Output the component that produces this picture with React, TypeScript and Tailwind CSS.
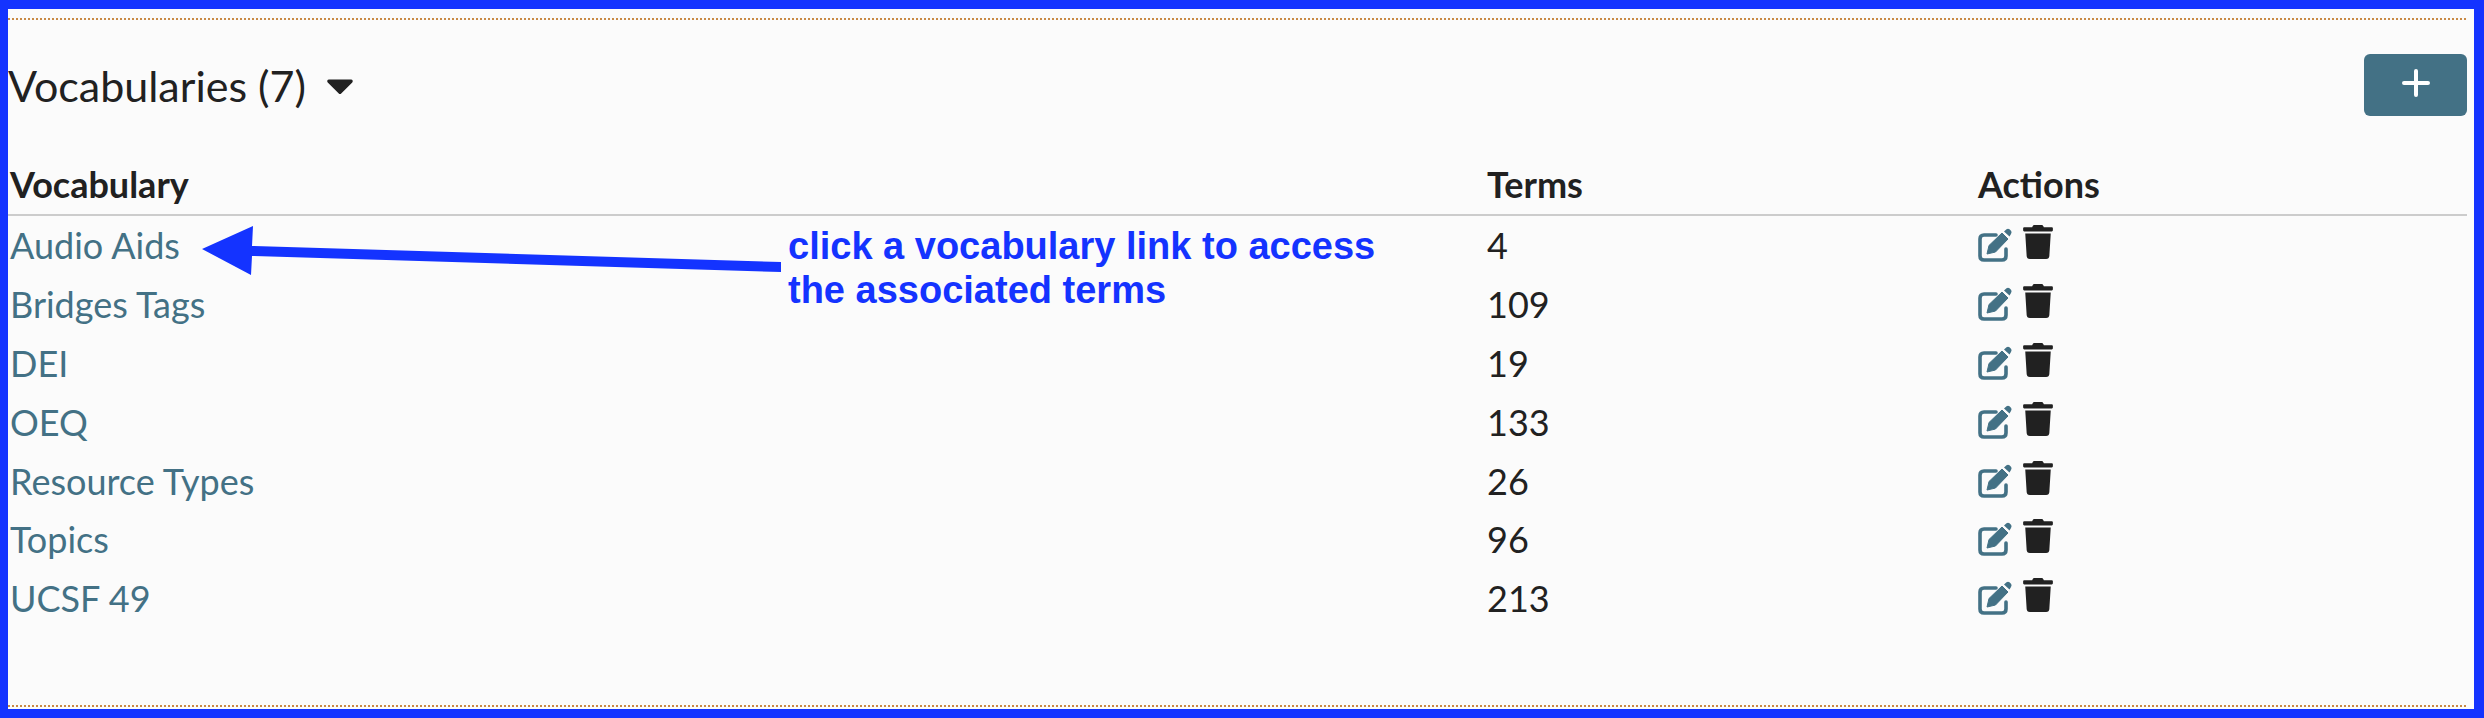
import { FaCaretDown, FaTrash } from "react-icons/fa";

const rows = [
  { name: "Audio Aids", terms: "4" },
  { name: "Bridges Tags", terms: "109" },
  { name: "DEI", terms: "19" },
  { name: "OEQ", terms: "133" },
  { name: "Resource Types", terms: "26" },
  { name: "Topics", terms: "96" },
  { name: "UCSF 49", terms: "213" },
];

function EditIcon() {
  return (
    <svg className="h-[34px] w-[34px] text-[#437185]" viewBox="0 0 34 34" aria-hidden="true">
      <path
        d="M18 7 H6 Q2 7 2 11 V28 Q2 32 6 32 H24 Q28 32 28 28 V21"
        fill="none"
        stroke="currentColor"
        strokeWidth="3.6"
        strokeLinecap="round"
      />
      <path d="M9 26 L11 17.5 L24 5 L30 11 L17.5 24 Z" fill="currentColor" stroke="currentColor" strokeWidth="1" strokeLinejoin="round" />
      <path d="M26 3.5 L28.5 1.2 Q30 0.4 31.5 1.2 L33.2 3 Q34 4.5 33 6 L31.5 8.5 Z" fill="currentColor" />
    </svg>
  );
}

export default function App() {
  return (
    <div className="relative h-[718px] w-[2484px] overflow-hidden border-t-[9px] border-r-[10px] border-b-[9px] border-l-[8px] border-[#1433ff] bg-[#fbfbfb] font-['Lato',sans-serif] text-[#212121]">
      <div className="mt-[9px] mr-[8px] h-[2px] border-t-2 border-dotted border-[#c98a45]" />

      <div className="mr-[7px]">
        {/* heading row */}
        <div className="mt-[34px] flex h-[62px] items-center justify-between">
          <div className="flex items-center">
            <h2 className="text-[43px] leading-none font-normal">Vocabularies (7)</h2>
            <FaCaretDown className="ml-[20px] h-[44px] w-[28px]" />
          </div>
          <button className="flex h-[62px] w-[103px] items-center justify-center rounded-[6px] bg-[#437185]">
            <svg className="mb-[4px]" width="28" height="28" viewBox="0 0 28 28" aria-hidden="true">
              <path d="M14 2 V26 M2 14 H26" stroke="#fff" strokeWidth="4" strokeLinecap="round" fill="none" />
            </svg>
          </button>
        </div>

        {/* table */}
        <div className="mt-[38px] grid h-[62px] grid-cols-[1477px_491px_1fr] items-center border-b-2 border-[#cccccc] pl-[2px] text-[36px] font-bold">
          <div>Vocabulary</div>
          <div>Terms</div>
          <div>Actions</div>
        </div>
        {rows.map((row) => (
          <div key={row.name} className="grid h-[58.8px] grid-cols-[1477px_491px_1fr] items-center pl-[2px] text-[36px]">
            <a href="#" className="text-[#437185]">{row.name}</a>
            <div>{row.terms}</div>
            <div className="flex items-center gap-[11px]">
              <EditIcon />
              <FaTrash className="mb-[6px] h-[34px] w-[30px]" />
            </div>
          </div>
        ))}
      </div>

      {/* annotation over the table */}
      <svg className="absolute top-[210px] left-[190px]" width="600" height="70" viewBox="0 0 600 70" aria-hidden="true">
        <path d="M4 30 L55 7 L54 27 L583 43 L583 53 L54 37 L53 56 Z" fill="#1433ff" />
      </svg>
      <div className="absolute top-[215px] left-[780px] font-['Liberation_Sans',sans-serif] text-[38px] leading-[44px] font-bold text-[#1433ff]">
        click a vocabulary link to access
        <br />
        the associated terms
      </div>

      <div className="absolute right-[8px] bottom-[2px] left-0 border-t-2 border-dotted border-[#c98a45]" />
    </div>
  );
}
